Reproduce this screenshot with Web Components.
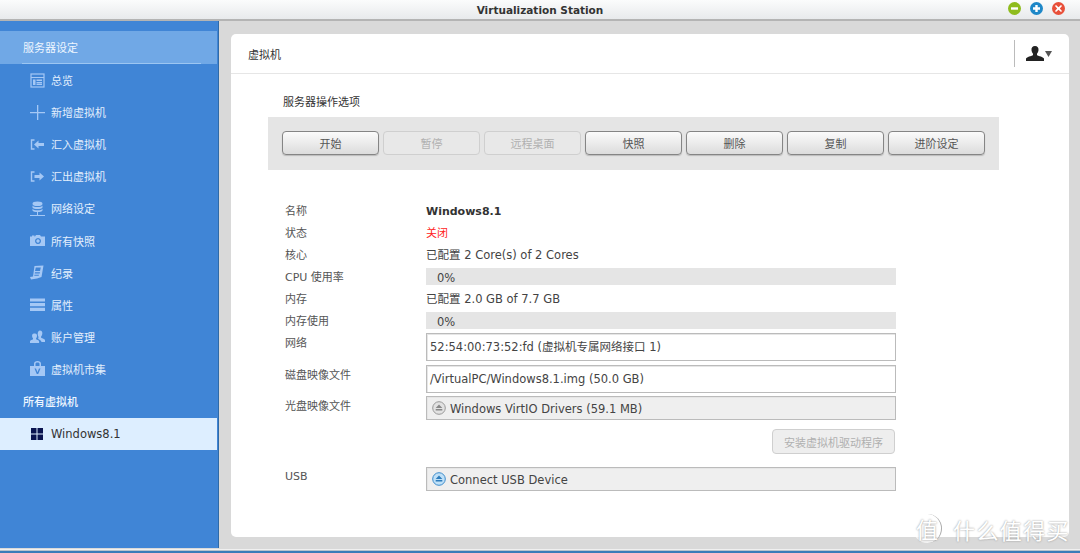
<!DOCTYPE html>
<html lang="zh">
<head>
<meta charset="utf-8">
<title>Virtualization Station</title>
<style>
    html, body { margin: 0; height: 100%; overflow: hidden; }
    body { font: 12px/16px "DejaVu Sans", "Noto Sans CJK SC", sans-serif; color: #444; }
</style>
</head>
<body>
<vm-app>
    <vm-titlebar slot="top">Virtualization Station</vm-titlebar>
    <vm-sidebar slot="side">
        <nav-head>服务器设定</nav-head>
        <nav-item icon="overview">总览</nav-item>
        <nav-item icon="plus">新增虚拟机</nav-item>
        <nav-item icon="import">汇入虚拟机</nav-item>
        <nav-item icon="export">汇出虚拟机</nav-item>
        <nav-item icon="network">网络设定</nav-item>
        <nav-item icon="camera">所有快照</nav-item>
        <nav-item icon="log">纪录</nav-item>
        <nav-item icon="props">属性</nav-item>
        <nav-item icon="users">账户管理</nav-item>
        <nav-item icon="market">虚拟机市集</nav-item>
        <nav-group>所有虚拟机</nav-group>
        <nav-item icon="windows" selected>Windows8.1</nav-item>
    </vm-sidebar>
    <vm-card slot="main" heading="虚拟机">
        <section-title>服务器操作选项</section-title>
        <vm-toolbar>
            <vm-button>开始</vm-button>
            <vm-button disabled>暂停</vm-button>
            <vm-button disabled>远程桌面</vm-button>
            <vm-button>快照</vm-button>
            <vm-button>删除</vm-button>
            <vm-button>复制</vm-button>
            <vm-button>进阶设定</vm-button>
        </vm-toolbar>
        <info-list>
            <info-row label="名称"><b style="color:#333;font-size:11px">Windows8.1</b></info-row>
            <info-row label="状态"><span style="color:#f22;font-size:11px">关闭</span></info-row>
            <info-row label="核心">已配置 2 Core(s) of 2 Cores</info-row>
            <info-row label="CPU 使用率"><vm-meter>0%</vm-meter></info-row>
            <info-row label="内存">已配置 2.0 GB of 7.7 GB</info-row>
            <info-row label="内存使用"><vm-meter>0%</vm-meter></info-row>
            <info-row label="网络" size="net"><vm-field>52:54:00:73:52:fd (虚拟机专属网络接口 1)</vm-field></info-row>
            <info-row label="磁盘映像文件" size="disk"><vm-field>/VirtualPC/Windows8.1.img (50.0 GB)</vm-field></info-row>
            <info-row label="光盘映像文件" size="cd"><vm-field kind="grey" eject="off">Windows VirtIO Drivers (59.1 MB)</vm-field></info-row>
            <info-row size="action"><vm-button wide disabled>安装虚拟机驱动程序</vm-button></info-row>
            <info-row label="USB" size="usb"><vm-field kind="grey" eject="on">Connect USB Device</vm-field></info-row>
        </info-list>
    </vm-card>
    <vm-watermark slot="over"></vm-watermark>
</vm-app>

<script>
const ICONS = {
    overview: `<rect x="1" y="1" width="13" height="13" fill="none" stroke="currentColor" stroke-width="1.2"/><path d="M1 4h13v1H1zM3 6.500h2.500V12H3zM6.500 6.500H12V8H6.500zM6.500 9H12v1.200H6.500zM6.500 10.800H12V12H6.500z" fill="currentColor"/>`,
    plus: `<path d="M7 0h1.300v15H7zM0 6.900h15v1.300H0z" fill="currentColor"/>`,
    import: `<path d="M4.500 3H1.500v9h3" fill="none" stroke="currentColor" stroke-width="1.400"/><path d="M4 7.500 8.500 3.500V6H14v3H8.500v2.500z" fill="currentColor"/>`,
    export: `<path d="M4.500 3H1.500v9h3" fill="none" stroke="currentColor" stroke-width="1.400"/><path d="M14 7.500 9.500 3.500V6H4.500v3h5v2.500z" fill="currentColor"/>`,
    network: `<ellipse cx="7.500" cy="2.800" rx="5" ry="2.300" fill="currentColor"/><path d="M2.500 4.500c1 2 9 2 10 0v2c-1 2-9 2-10 0zM2.500 7.700c1 2 9 2 10 0v1.800c-1 2-9 2-10 0z" fill="currentColor"/><path d="M0 14h15v1H0zM7 11h1v3H7z" fill="currentColor"/>`,
    camera: `<path fill-rule="evenodd" d="M0 3.500h2V2.500h2.500v1H5L6 2h4l1 1.500h4V13H0zM8 5a3 3 0 1 0 .01 0zM8 6.300a1.700 1.700 0 1 1-.01 0z" fill="currentColor"/>`,
    log: `<path fill-rule="evenodd" d="M4.500 1 13.500.500 11.500 12 7 13.500 1 14.500 0 12l3-.5zM5.800 2.500 5 6h5l.8-3.500zM5 7.300l-.3 1.200h5l.3-1.200zM4.500 9.800l-.3 1h4.500l.3-1z" fill="currentColor"/>`,
    props: `<path d="M0 1.500h15v3H0zM0 6h15v3.200H0zM0 10.700h15V14H0z" fill="currentColor"/>`,
    users: `<path d="M9.800 1.500c2 0 2.800 1.500 2.500 3.500-.2 1.200-.7 2-1.200 2.500v1.200c1.500.7 3.400 1.200 3.900 2.300v2H11.500c-.2-1.500-2-2.300-3.300-3l.3-2c-.5-.8-.8-2-.8-3 0-2 1-3.500 2.100-3.500z" fill="currentColor"/><path d="M5 4.500c1.500 0 2.200 1.200 2 2.700-.1 1-.5 1.600-.9 2v1c1.200.6 2.700 1 3 2V14H0v-1.800c.4-1 2-1.400 3-2v-1c-.5-.4-.8-1.100-.9-2-.2-1.500.5-2.700 1.900-2.700z" fill="currentColor"/>`,
    market: `<path fill-rule="evenodd" d="M0 5h4V2.800C4 1 5.500 0 7.500 0S11 1 11 2.800V5h4v10H0zM5.500 5h4V2.800c0-.9-.9-1.400-2-1.400s-2 .5-2 1.400zM4.500 7.500l2.300 5.500h1.400l2.300-5.500H9L7.500 11.200 6 7.500z" fill="currentColor"/>`,
    windows: `<path d="M0 0h5.500v5.500H0zM6.500 0H12v5.500H6.500zM0 6.500h5.500V12H0zM6.500 6.500H12V12H6.500z" fill="#0a1450"/>`
};

// small helper so every class keeps the same shape
function shadow(el, html) {
    el.attachShadow({ mode: 'open' }).innerHTML = html;
}

class VmApp extends HTMLElement {
    constructor() {
        super();
        shadow(this, `<style>
            :host{ display:flex; flex-direction:column; position:relative; width:1080px; height:553px; overflow:hidden; background:#d9d9d9; }
            .body{ display:flex; height:527px; }
            .main{ flex:1; display:flex; padding:13px 11px 11px 11px; background:#d9d9d9; border-left:1px solid #d9d9d9; }
            .foot{ height:5px; background:linear-gradient(#d9d9d9 0 1px,#f0f0f0 1px 2px,#b9c3cc 2px 3px,#3c7cb8 3px); }
        </style>
        <slot name="top"></slot>
        <div class="body"><slot name="side"></slot><div class="main"><slot name="main"></slot></div></div>
        <div class="foot"></div>
        <slot name="over"></slot>`);
    }
}

class VmTitlebar extends HTMLElement {
    constructor() {
        super();
        shadow(this, `<style>
            :host{ display:flex; align-items:center; justify-content:center; position:relative; height:21px; box-sizing:border-box; background:linear-gradient(#fbfcfc,#e8eaec); border-bottom:2px solid #b4b4b4; font:bold 10.500px/20px "DejaVu Sans",sans-serif; color:#333; padding-top:1px; }
            .btns{ position:absolute; right:15px; top:2px; display:flex; gap:9px; }
            svg{ display:block; }
        </style>
        <slot></slot>
        <div class="btns">
            <svg width="13" height="13" viewBox="0 0 13 13"><circle cx="6.500" cy="6.500" r="6.500" fill="#8fbc1e"/><rect x="3" y="5.300" width="7" height="2.400" fill="#fff"/></svg>
            <svg width="13" height="13" viewBox="0 0 13 13"><circle cx="6.500" cy="6.500" r="6.500" fill="#1e88c8"/><path d="M5.300 3h2.400v2.300H10v2.400H7.700V10H5.300V7.700H3V5.300h2.300z" fill="#fff"/></svg>
            <svg width="13" height="13" viewBox="0 0 13 13"><circle cx="6.500" cy="6.500" r="6.500" fill="#e8503a"/><path d="M4 3 6.500 5.200 9 3l1 1-2.200 2.500L10 9 9 10 6.500 7.800 4 10 3 9l2.200-2.500L3 4z" fill="#fff"/></svg>
        </div>`);
    }
}

class VmSidebar extends HTMLElement {
    constructor() {
        super();
        shadow(this, `<style>
            :host{ display:block; flex:0 0 217px; width:217px; box-sizing:content-box; padding:10px 1px 0 0; background:#4085d6; border-right:1px solid #2f6aa8; }
        </style><slot></slot>`);
    }
}

class NavHead extends HTMLElement {
    constructor() {
        super();
        shadow(this, `<style>
            :host{ display:block; position:relative; height:33px; box-sizing:border-box; padding-left:23px; background:#70a8e6; color:#eef6ff; font:11px/32px "Noto Sans CJK SC",sans-serif; }
            :host::after{ content:""; position:absolute; left:22px; width:179px; bottom:0; height:1px; background:#9cc6f2; }
        </style><slot></slot>`);
    }
}

class NavGroup extends HTMLElement {
    constructor() {
        super();
        shadow(this, `<style>
            :host{ display:block; height:33px; padding-left:23px; color:#eef6ff; font:500 11px/32px "Noto Sans CJK SC",sans-serif; }
        </style><slot></slot>`);
    }
}

class NavItem extends HTMLElement {
    constructor() {
        super();
        const name = this.getAttribute('icon');
        const size = name === 'windows' ? 12 : 15;
        shadow(this, `<style>
            :host{ display:flex; align-items:center; height:32.100px; padding-left:30px; gap:6px; color:#e3effd; font:11px/32px "Noto Sans CJK SC",sans-serif; }
            :host([selected]){ height:32px; background:#ddeeff; color:#333; font:11.500px/32px "DejaVu Sans",sans-serif; padding-left:31px; gap:5px; }
            .ic{ display:flex; width:15px; color:#a5c8f5; }
        </style>
        <span class="ic"><svg width="${size}" height="${size}" viewBox="0 0 ${size} ${size}">${ICONS[name]}</svg></span><slot></slot>`);
    }
}

class VmCard extends HTMLElement {
    constructor() {
        super();
        shadow(this, `<style>
            :host{ display:flex; flex-direction:column; flex:1; background:#fff; border-radius:5px; }
            header{ display:flex; align-items:center; height:40px; box-sizing:border-box; padding-left:17px; border-bottom:1px solid #e6e6e6; font:11px/16px "Noto Sans CJK SC",sans-serif; color:#333; }
            .user{ margin-left:auto; display:flex; align-items:center; gap:1px; height:27px; width:55px; box-sizing:border-box; padding-left:11px; border-left:1px solid #bbb; }
            .content{ padding:19px 0 0 37px; }
        </style>
        <header>
            <span>${this.getAttribute('heading')}</span>
            <div class="user">
                <svg width="18" height="16" viewBox="0 0 18 16"><path d="M9 0c2.500 0 3.800 1.800 3.500 4.300-.2 1.600-.8 2.700-1.500 3.400v1.500c2 .9 6 1.600 7 3.300V15H0v-2.500c1-1.700 5-2.400 7-3.300V7.700C6.300 7 5.700 5.900 5.500 4.300 5.200 1.800 6.500 0 9 0z" fill="#222"/></svg>
                <svg width="7" height="6" viewBox="0 0 7 6"><path d="M0 0h7L3.500 6z" fill="#555"/></svg>
            </div>
        </header>
        <div class="content"><slot></slot></div>`);
    }
}

class SectionTitle extends HTMLElement {
    constructor() {
        super();
        shadow(this, `<style>
            :host{ display:block; padding-left:15px; height:24px; font:11px/17px "Noto Sans CJK SC",sans-serif; color:#333; }
        </style><slot></slot>`);
    }
}

class VmToolbar extends HTMLElement {
    constructor() {
        super();
        shadow(this, `<style>
            :host{ display:flex; gap:4px; width:731px; height:53px; box-sizing:border-box; padding:14px 14px 0; background:#e5e5e5; }
        </style><slot></slot>`);
    }
}

class VmButton extends HTMLElement {
    constructor() {
        super();
        shadow(this, `<style>
            :host{ display:flex; align-items:center; justify-content:center; flex:0 0 97px; width:97px; height:24px; box-sizing:border-box; border:1px solid #858585; border-radius:4px; background:linear-gradient(#fbfbfb,#dcdcdc); box-shadow:0 1px 1px #bbb; color:#555; font:11px/16px "Noto Sans CJK SC",sans-serif; }
            :host([disabled]){ border-color:#cfcfcf; background:#e8e8e8; color:#b0b0b0; box-shadow:none; }
            :host([wide]){ flex-basis:123px; width:123px; height:25px; margin-left:auto; margin-right:1px; background:#eee; }
        </style><slot></slot>`);
    }
}

class InfoList extends HTMLElement {
    constructor() {
        super();
        shadow(this, `<style>:host{ display:block; padding-top:30px; }</style><slot></slot>`);
    }
}

class InfoRow extends HTMLElement {
    constructor() {
        super();
        shadow(this, `<style>
            :host{ display:grid; grid-template-columns:141px 470px; height:22px; margin-left:17px; color:#444; font:11.500px/22px "DejaVu Sans","Noto Sans CJK SC",sans-serif; }
            :host([size="net"]){ height:31px; }
            :host([size="disk"]){ height:31px; }
            :host([size="cd"]){ height:26px; }
            :host([size="action"]){ height:25px; margin:9px 0 13px 17px; }
            :host([size="usb"]){ height:24px; }
            :host([size="net"]) .v{ padding-top:1px; }
            :host([size="disk"]) .v, :host([size="cd"]) .v{ padding-top:2px; }
            :host([size="disk"]) .l, :host([size="cd"]) .l{ padding-top:2px; }
            :host([size="usb"]) .l{ margin-top:-2px; }
            .l{ color:#555; font-size:11px; line-height:22px; padding-top:1px; }
            .v{ min-width:0; box-sizing:border-box; }
        </style>
        <div class="l">${this.getAttribute('label') || ''}</div><div class="v"><slot></slot></div>`);
    }
}

class VmMeter extends HTMLElement {
    constructor() {
        super();
        shadow(this, `<style>
            :host{ display:block; height:17px; margin-top:2px; padding-left:11px; background:#e5e5e5; color:#444; line-height:20px; }
        </style><slot></slot>`);
    }
}

class VmField extends HTMLElement {
    constructor() {
        super();
        const eject = this.getAttribute('eject');
        let icon = '';
        if (eject) {
            const on = eject === 'on';
            icon = `<svg width="14" height="14" viewBox="0 0 14 14"><circle cx="7" cy="7" r="6.300" fill="${on ? '#bfe0f7' : '#e2e2e2'}" stroke="${on ? '#3d8ccc' : '#999'}"/><path d="M7 3.500 10.300 7H3.700zM3.700 8h6.600v1.500H3.700z" fill="${on ? '#2d7cbc' : '#888'}"/></svg>`;
        }
        shadow(this, `<style>
            :host{ display:flex; align-items:center; gap:4px; box-sizing:border-box; height:28px; padding-left:3px; background:#fff; border:1px solid #bbb; box-shadow:inset 1px 1px 0 #e6e6e6; color:#444; font:11.500px/16px "DejaVu Sans","Noto Sans CJK SC",sans-serif; white-space:nowrap; }
            :host([kind="grey"]){ height:24px; padding-left:5px; background:#efefef; }
            :host([kind="grey"]) span{ padding-top:1px; }
            svg{ flex:none; }
        </style>${icon}<span><slot></slot></span>`);
    }
}

class VmWatermark extends HTMLElement {
    constructor() {
        super();
        shadow(this, `<style>
            :host{ position:absolute; left:913px; top:514px; display:flex; align-items:center; gap:11px; color:#fff; font:22px/28px "Noto Sans CJK SC",sans-serif; text-shadow:0 0 2px #888; white-space:nowrap; }
            .c{ width:29px; height:29px; box-sizing:border-box; border-radius:50%; border-right:1.500px solid #aaa; text-align:center; background:rgba(255,255,255,.7); }
            .t{ letter-spacing:1.400px; }
        </style><span class="c">值</span><span class="t">什么值得买</span>`);
    }
}

customElements.define('vm-app', VmApp);
customElements.define('vm-titlebar', VmTitlebar);
customElements.define('vm-sidebar', VmSidebar);
customElements.define('nav-head', NavHead);
customElements.define('nav-group', NavGroup);
customElements.define('nav-item', NavItem);
customElements.define('vm-card', VmCard);
customElements.define('section-title', SectionTitle);
customElements.define('vm-toolbar', VmToolbar);
customElements.define('vm-button', VmButton);
customElements.define('info-list', InfoList);
customElements.define('info-row', InfoRow);
customElements.define('vm-meter', VmMeter);
customElements.define('vm-field', VmField);
customElements.define('vm-watermark', VmWatermark);
</script>
</body>
</html>
